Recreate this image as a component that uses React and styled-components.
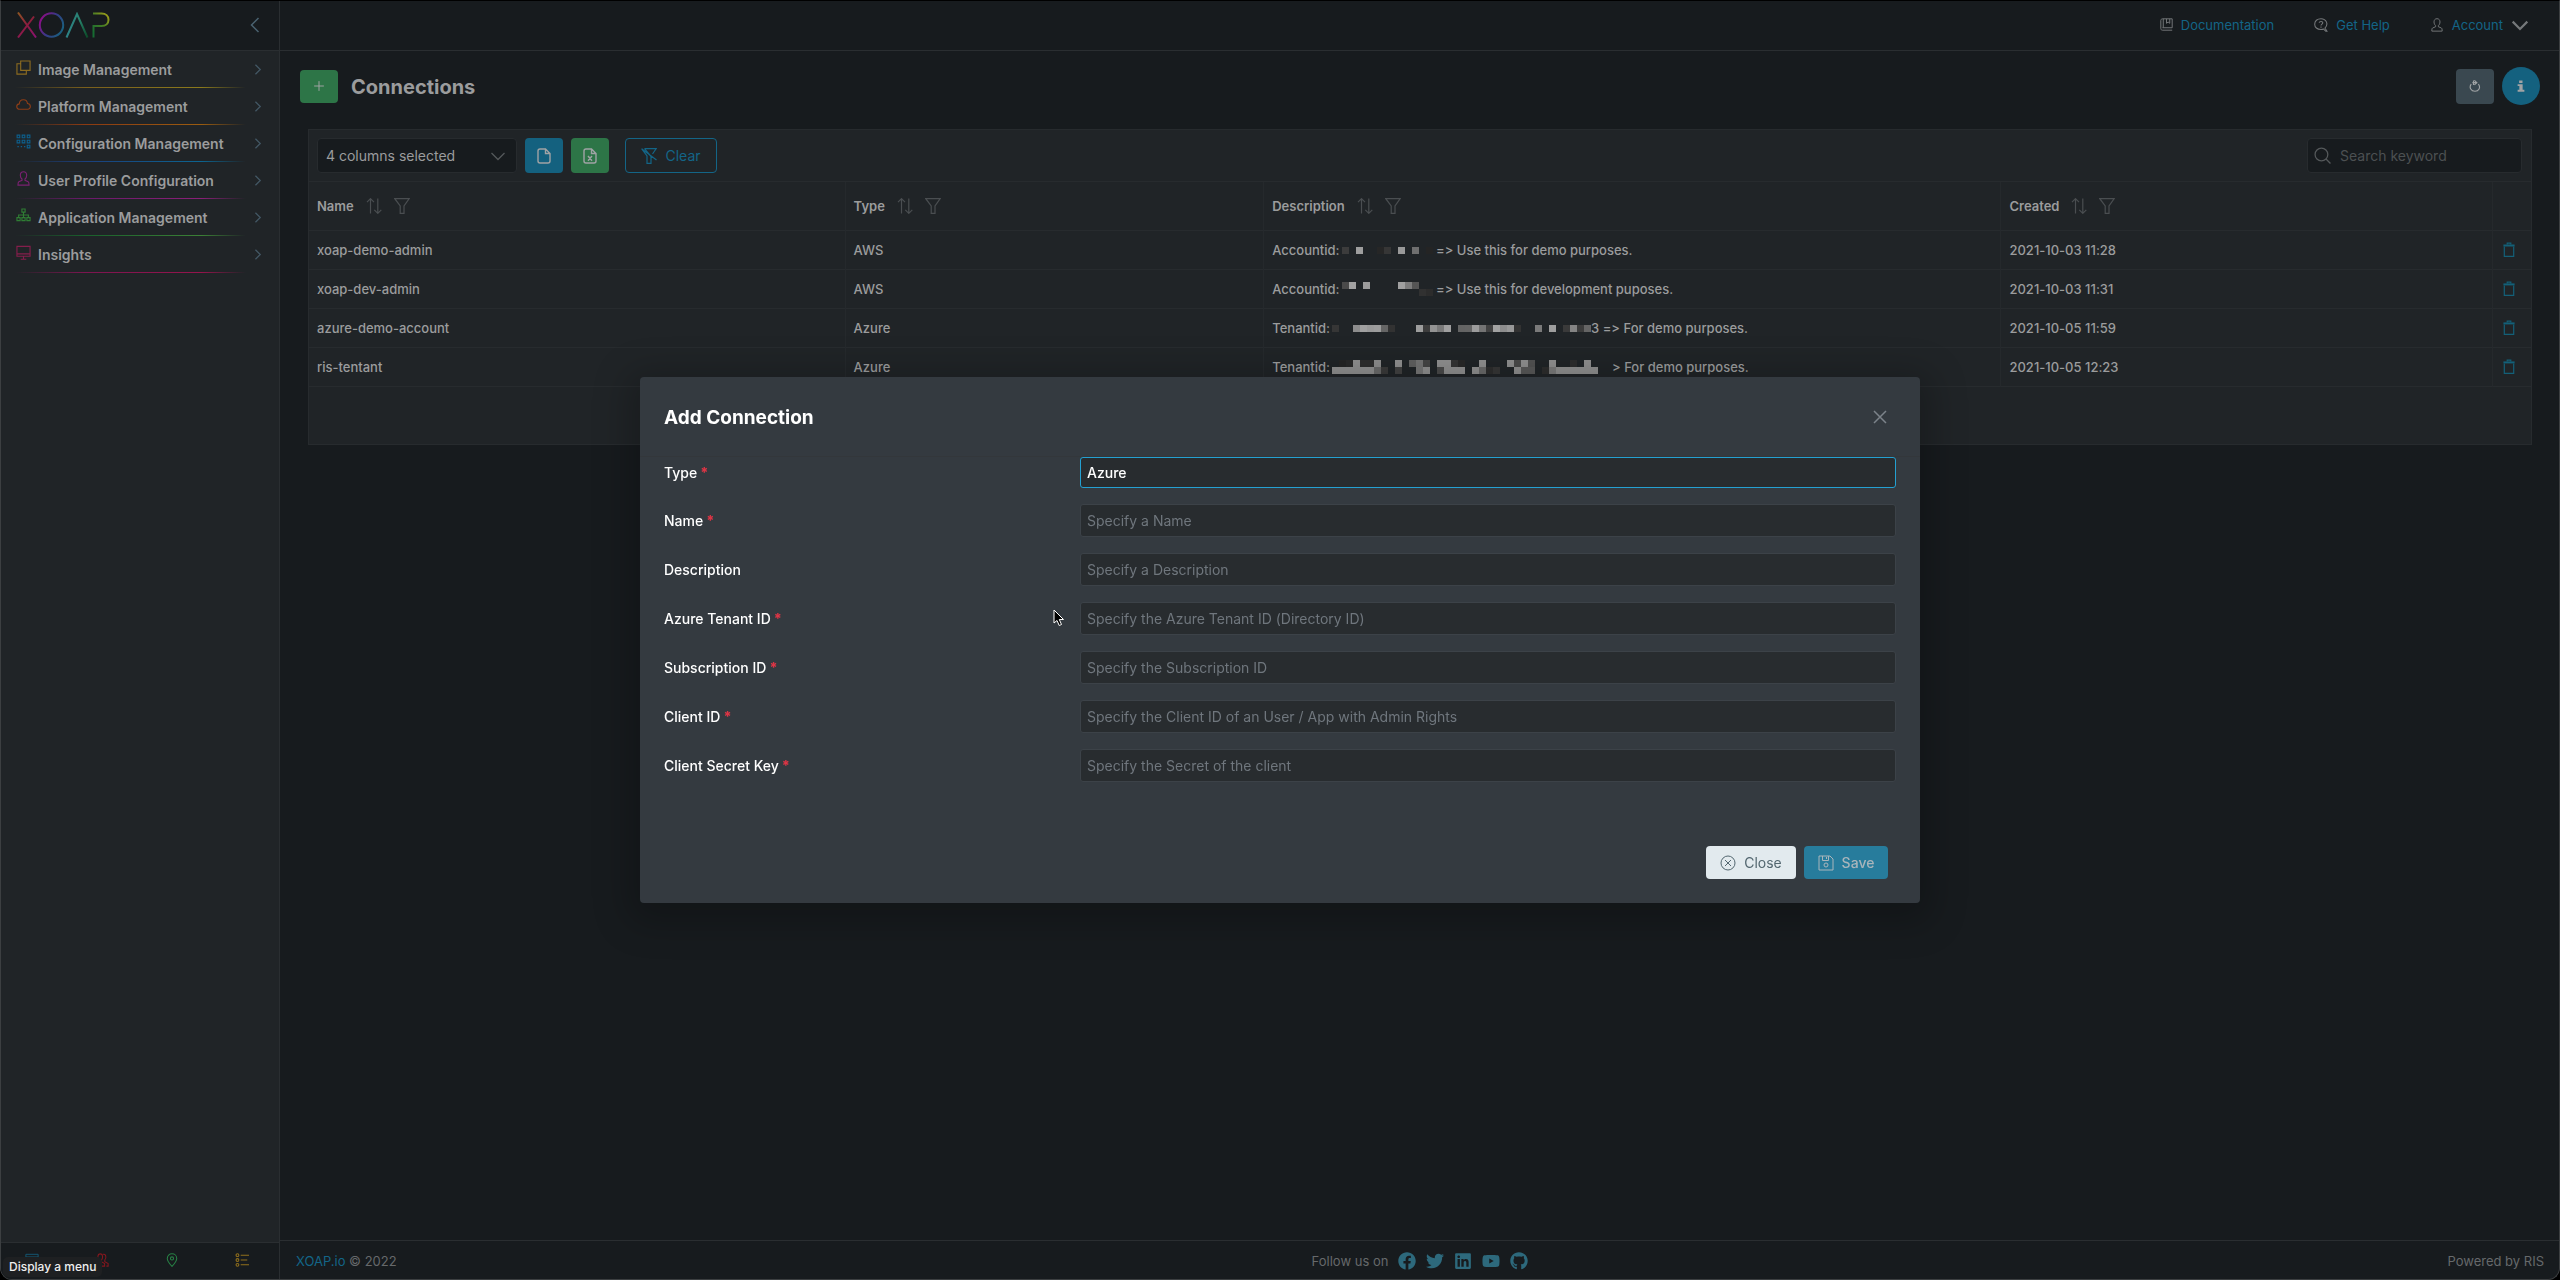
import React, { useState } from 'react';
import styled, { createGlobalStyle } from 'styled-components';
import { FaFacebook, FaTwitter, FaLinkedin, FaYoutube, FaGithub } from 'react-icons/fa';

const GlobalStyle = createGlobalStyle`
  * {
    box-sizing: border-box;
  }

  body {
    margin: 0;
    background-color: #000000;
    color: #9b9c9d;
    font-family: Inter, 'Liberation Sans', sans-serif;
    font-size: 14px;
    font-variant-ligatures: no-contextual;
    line-height: 20px;
  }

  button, input, select {
    font: inherit;
  }
`;

const Page = styled.div`
  display: grid;
  grid-template-columns: 279px 1fr;
  min-height: 100vh;
  background-color: #171b1e;
  border: 1px solid #3c3f41;
  border-top-color: #000000;
  border-radius: 0 0 12px 12px;
  overflow: hidden;
`;

const Sidebar = styled.aside`
  display: flex;
  flex-direction: column;
  background-color: #202427;
  border-right: 1px solid #2a2e31;
`;

const SidebarTop = styled.div`
  display: flex;
  justify-content: space-between;
  align-items: center;
  height: 50px;
  padding: 0 16px 2px 16px;
  background-color: #171b1e;
  border-bottom: 1px solid #2a2e31;
`;

const IconButton = styled.button`
  display: flex;
  padding: 0;
  border: none;
  background: none;
  color: ${props => props.$color || '#3f5360'};
  cursor: pointer;
`;

const Menu = styled.nav`
  display: flex;
  flex-direction: column;
  flex: 1;
`;

const MenuItem = styled.a`
  display: flex;
  align-items: center;
  height: 37px;
  padding: 0 16px 0 15px;
  color: #9b9c9d;
  font-weight: 600;
  text-decoration: none;
  background: linear-gradient(
    90deg,
    transparent 5%,
    ${props => props.$from} 30%,
    ${props => props.$to} 72%,
    transparent 88%
  ) bottom / 100% 1px no-repeat;

  span {
    flex: 1;
    margin-left: 7px;
  }
`;

const MenuIcon = styled.svg`
  flex: none;
  margin-bottom: 4px;
`;

const SidebarBottom = styled.div`
  display: flex;
  align-items: center;
  gap: 56px;
  height: 37px;
  padding: 0 24px 2px;
  background-color: #171b1e;
  border-top: 1px solid #2a2e31;
`;

const Content = styled.div`
  display: flex;
  flex-direction: column;
  min-width: 0;
`;

const TopBar = styled.header`
  display: flex;
  justify-content: flex-end;
  align-items: center;
  gap: 40px;
  height: 50px;
  padding: 0 30px 2px 0;
  border-bottom: 1px solid #2a2e31;
`;

const TopLink = styled.a`
  display: flex;
  align-items: center;
  gap: 8px;
  color: #136587;
  font-size: 13px;
  text-decoration: none;

  svg {
    color: #75787a;
  }
`;

const Main = styled.main`
  flex: 1;
  padding: 16px 19px 16px 20px;
`;

const TitleBar = styled.div`
  display: flex;
  align-items: center;
  height: 38px;
`;

const Title = styled.h1`
  flex: 1;
  margin: 0 0 0 13px;
  padding-top: 2px;
  font-size: 20px;
  font-weight: 700;
  line-height: 28px;
`;

const SolidButton = styled.button`
  display: flex;
  justify-content: center;
  align-items: center;
  width: 38px;
  height: ${props => props.$height || 35}px;
  padding: 0;
  border: none;
  border-radius: ${props => (props.$round ? '50%' : '4px')};
  background-color: ${props => props.$color};
  color: #a0a3a5;
  cursor: pointer;

  & + & {
    margin-left: 8px;
  }
`;

const Panel = styled.section`
  margin: 24px 8px 0 8px;
  padding-bottom: 57px;
  background-color: #202427;
  border: 1px solid #272b2e;
`;

const Toolbar = styled.div`
  display: flex;
  align-items: center;
  height: 52px;
  padding: 0 9px 0 8px;
  border-bottom: 1px solid #272b2e;
`;

const SelectBox = styled.div`
  display: grid;
  align-items: center;
  width: 200px;
  height: 35px;
  margin-right: 8px;

  select, svg {
    grid-area: 1 / 1;
  }

  select {
    appearance: none;
    width: 100%;
    height: 100%;
    padding: 0 8px;
    border: 1px solid #272b2e;
    border-radius: 4px;
    background-color: #171b1e;
    color: #9b9c9d;
  }

  svg {
    justify-self: end;
    margin-right: 11px;
    color: #54585a;
    pointer-events: none;
  }
`;

const ClearButton = styled.button`
  display: flex;
  justify-content: center;
  align-items: center;
  gap: 8px;
  width: 92px;
  height: 35px;
  margin: 0 auto 0 16px;
  padding: 0;
  border: 1px solid #136587;
  border-radius: 4px;
  background: none;
  color: #136587;
  cursor: pointer;
`;

const SearchBox = styled.label`
  display: flex;
  align-items: center;
  gap: 9px;
  width: 215px;
  height: 35px;
  padding: 0 6px;
  border: 1px solid #272b2e;
  border-radius: 4px;
  background-color: #171b1e;
  color: #54585a;

  svg {
    flex: none;
  }

  input {
    width: 100%;
    padding: 0;
    border: none;
    outline: none;
    background: none;
    color: #9b9c9d;
  }

  input::placeholder {
    color: #4c5052;
    opacity: 1;
  }
`;

const Table = styled.table`
  width: 100%;
  table-layout: fixed;
  border-collapse: separate;
  border-spacing: 0;
  font-size: 13px;
`;

const HeadCell = styled.th`
  width: ${props => props.$width};
  height: 49px;
  padding: 0 8px;
  border-right: 1px solid #25292c;
  border-bottom: 1px solid #272b2e;
  font-weight: 600;
  text-align: left;

  &:last-child {
    border-right: none;
  }
`;

const HeadContent = styled.div`
  display: flex;
  align-items: center;
  gap: 12px;
`;

const Cell = styled.td`
  height: 39px;
  padding: 0 8px;
  border-right: 1px solid #25292c;
  border-bottom: 1px solid #272b2e;
  white-space: nowrap;
  font-weight: 500;

  &:last-child {
    border-right: none;
  }
`;

const DescriptionLine = styled.div`
  display: flex;
  align-items: center;
  white-space: pre;
`;

const Mosaic = styled.svg`
  flex: none;
  margin-left: 2px;
`;

const Footer = styled.footer`
  display: grid;
  grid-template-columns: 1fr auto 1fr;
  align-items: center;
  height: 39px;
  padding: 2px 15px 0 16px;
  border-top: 1px solid #2a2e31;
  color: #66696b;
  font-size: 13px;

  a {
    color: #136587;
    text-decoration: none;
  }

  div:last-child {
    text-align: right;
  }
`;

const Social = styled.div`
  display: flex;
  align-items: center;
  gap: 10px;

  a {
    display: flex;
    color: #2d697c;
  }
`;

const Backdrop = styled.div`
  position: fixed;
  inset: 0;
  display: flex;
  justify-content: center;
  align-items: center;
`;

const Dialog = styled.form`
  width: 50%;
  background-color: #343a40;
  border-radius: 4px;
  box-shadow: 0 8px 36px 12px rgba(0, 0, 0, 0.22);
  color: #ffffff;
`;

const DialogHeader = styled.div`
  display: flex;
  justify-content: space-between;
  align-items: center;
  height: 80px;
  padding: 0 32px 0 24px;
  border-bottom: 1px solid #33373b;

  h2 {
    margin: 0;
    padding-top: 2px;
    font-size: 19px;
    font-weight: 700;
    line-height: 24px;
  }
`;

const Fields = styled.div`
  display: flex;
  flex-direction: column;
  gap: 16px;
  padding: 0 24px;
`;

const Field = styled.div`
  display: grid;
  grid-template-columns: 1fr 2fr;
  align-items: center;
  gap: 8px;

  label {
    font-weight: 500;
  }

  em {
    color: #dc3545;
    font-style: normal;
    font-weight: 800;
  }

  input {
    width: 100%;
    height: ${props => (props.$active ? 31 : 33)}px;
    padding: 0 6px;
    border: 1px solid ${props => (props.$active ? '#24a0d1' : '#3c4248')};
    border-radius: 3px;
    outline: none;
    background-color: #282c2f;
    color: #ffffff;
    font-weight: ${props => (props.$active ? 500 : 400)};
  }

  input::placeholder {
    color: #6f767d;
    opacity: 1;
  }
`;

const DialogFooter = styled.div`
  display: flex;
  justify-content: flex-end;
  gap: 8px;
  padding: 64px 32px 24px;
`;

const DialogButton = styled.button`
  display: flex;
  justify-content: center;
  align-items: center;
  gap: 8px;
  width: ${props => (props.$primary ? 84 : 90)}px;
  height: 33px;
  padding: 0;
  border: none;
  border-radius: 4px;
  background-color: ${props => (props.$primary ? '#277c9c' : '#e2eaee')};
  color: ${props => (props.$primary ? '#a9b5bb' : '#536770')};
  font-weight: ${props => (props.$primary ? 500 : 400)};
`;

const Tooltip = styled.div`
  position: fixed;
  left: 3px;
  bottom: 3px;
  padding: 0 6px;
  border-radius: 5px;
  background-color: #1e2022;
  color: #eeeeee;
  font-size: 12px;
  font-weight: 500;
`;

const Cursor = styled.svg`
  position: fixed;
  left: 1053px;
  top: 609px;
`;

const Icon = ({ size = 16, width = 1, children, ...rest }) => (
  <svg width={size} height={size} viewBox="0 0 16 16" fill="none" stroke="currentColor" strokeWidth={width} {...rest}>
    {children}
  </svg>
);

const Chevron = ({ size, width }) => (
  <Icon size={size} width={width}><path d="M1.5 5L8 11.5L14.5 5" /></Icon>
);

const SortIcon = () => (
  <Icon width={1.2}><path d="M4.5 15.5V.8M1 4.2L4.5.7L8 4.2M11.8.5V15.2M8.3 11.8L11.8 15.3L15.3 11.8" /></Icon>
);

const FilterIcon = () => (
  <Icon width={1.2}><path d="M.8.7H15.2L10 8V15.4H6.2V8Z" /></Icon>
);

const TrashIcon = () => (
  <Icon width={1.2}>
    <path d="M3.3 4.4V14.4H12.7V4.4" />
    <path d="M2.4 3.4H13.6" strokeWidth="2" />
    <path d="M6.2 2.5V1.2H9.8V2.5" />
  </Icon>
);

const UserIcon = ({ size = 14 }) => (
  <Icon size={size} width={1.1}>
    <path d="M8 .8C5.7.8 4.6 2.4 4.6 4.5C4.6 6.5 5.4 7.8 6.4 8.6V10L3 11.4C2.3 11.8 2.1 13 2.1 15H13.9C13.9 13 13.7 11.8 13 11.4L9.6 10V8.6C10.6 7.8 11.4 6.5 11.4 4.5C11.4 2.4 10.3.8 8 .8Z" />
  </Icon>
);

const Logo = () => (
  <svg width="94" height="26" viewBox="0 0 94 26" fill="none" strokeWidth="2">
    <defs>
      <linearGradient id="x" x1="0" y1="0" x2="20" y2="25" gradientUnits="userSpaceOnUse">
        <stop stopColor="#8e5a20" /><stop offset=".5" stopColor="#8c1c3e" /><stop offset="1" stopColor="#8a1274" />
      </linearGradient>
      <linearGradient id="o" x1="22" y1="8" x2="46" y2="20" gradientUnits="userSpaceOnUse">
        <stop stopColor="#920a86" /><stop offset=".5" stopColor="#353b86" /><stop offset="1" stopColor="#17637e" />
      </linearGradient>
      <linearGradient id="a" x1="50" y1="20" x2="70" y2="24" gradientUnits="userSpaceOnUse">
        <stop stopColor="#2d8288" /><stop offset=".5" stopColor="#28816b" /><stop offset="1" stopColor="#0c4d2a" />
      </linearGradient>
      <linearGradient id="p" x1="76" y1="20" x2="92" y2="6" gradientUnits="userSpaceOnUse">
        <stop stopColor="#166c32" /><stop offset=".5" stopColor="#3f7a25" /><stop offset="1" stopColor="#93991b" />
      </linearGradient>
    </defs>
    <path d="M1 .5L19 25.5M17 4.5L1 25.5" stroke="url(#x)" />
    <circle cx="34.5" cy="13" r="11.7" stroke="url(#o)" />
    <path d="M49.5 25.5L60 2L70.5 25.5" stroke="url(#a)" />
    <path d="M76.5 25.5V14H84.5C88.8 14 91.5 11.5 91.5 7.8C91.5 4 88.8 1.5 84.5 1.5H76" stroke="url(#p)" />
  </svg>
);

const menu = [
  {
    label: 'Image Management', color: '#8b6b20', from: '#7a5f1c', to: '#8b7a1c',
    icon: <path d="M5 1H15V11H5ZM5 4H1V15H11V11" />,
  },
  {
    label: 'Platform Management', color: '#8c3d17', from: '#8b3a12', to: '#9a5c10',
    icon: <path d="M4 13C-.2 13 -.2 7.7 3.6 7.3C3.6 1.6 11.6 1.3 12.3 7C16.3 7.3 16.2 13 12.5 13Z" />,
  },
  {
    label: 'Configuration Management', color: '#0d5f8c', from: '#1b3f7c', to: '#0c6490',
    icon: <path d="M1.2 1.2H4V4H1.2ZM6.6 1.2H9.4V4H6.6ZM12 1.2H14.8V4H12ZM1.2 6.6H4V9.4H1.2ZM6.6 6.6H9.4V9.4H6.6ZM12 6.6H14.8V9.4H12ZM12 12H14.8V14.8H12ZM1.5 13.5H3M5 13.5H6.5M8.5 13.5H10" />,
  },
  {
    label: 'User Profile Configuration', color: '#7a2171', from: '#6a1a6a', to: '#8a2078',
    icon: <path d="M8 .8C5.7.8 4.6 2.4 4.6 4.5C4.6 6.5 5.4 7.8 6.4 8.6V10L3 11.4C2.3 11.8 2.1 13 2.1 15H13.9C13.9 13 13.7 11.8 13 11.4L9.6 10V8.6C10.6 7.8 11.4 6.5 11.4 4.5C11.4 2.4 10.3.8 8 .8Z" />,
  },
  {
    label: 'Application Management', color: '#2f7d34', from: '#19602c', to: '#3c8036',
    icon: <path d="M6.3 1H9.7V4.4H6.3ZM8 4.4V10M2.8 10V7.4H13.2V10M1 10.2H4.4V13.4H1ZM6.3 10.2H9.7V13.4H6.3ZM11.6 10.2H15V13.4H11.6Z" />,
  },
  {
    label: 'Insights', color: '#851e4c', from: '#7c1550', to: '#95144c',
    icon: <path d="M1 1.5H15V12H1ZM1 9.5H15M8 12V15M5 15.2H11" />,
  },
];

// [column, row, shade] of every 7px block that hides an account id
const mosaics = {
  demo: [[0, 0, 60], [2, 0, 158], [5, 0, 38], [6, 0, 54], [8, 0, 153], [10, 0, 111], [12, 0, 36]],
  dev: [[0, 0, 74], [1, 0, 162], [3, 0, 156], [8, 0, 160], [9, 0, 125], [10, 0, 85], [11, 1, 49], [12, 1, 44]],
  azure: [
    [0, 0, 54], [3, 0, 141], [4, 0, 160], [5, 0, 153], [6, 0, 156], [7, 0, 101], [8, 0, 50],
    [12, 0, 157], [13, 0, 61], [14, 0, 147], [15, 0, 122], [16, 0, 160],
    [18, 0, 100], [19, 0, 101], [20, 0, 156], [21, 0, 116], [22, 0, 65], [23, 0, 162], [24, 0, 141], [25, 0, 152], [26, 0, 50],
    [29, 0, 122], [31, 0, 158], [33, 0, 58], [34, 0, 132], [35, 0, 60], [36, 0, 101],
  ],
  ris: [
    [1, 0, 37], [2, 0, 41], [3, 0, 143], [4, 0, 45], [5, 0, 45], [6, 0, 140], [9, 0, 143], [11, 0, 96], [12, 0, 116], [13, 0, 69],
    [15, 0, 143], [16, 0, 143], [17, 0, 52], [18, 0, 40], [21, 0, 143], [25, 0, 143], [26, 0, 74], [27, 0, 143], [28, 0, 82],
    [31, 0, 143], [34, 0, 45], [36, 0, 143],
    [0, 1, 143], [1, 1, 143], [2, 1, 143], [3, 1, 143], [4, 1, 143], [5, 1, 143], [6, 1, 106], [7, 1, 58], [9, 1, 66],
    [12, 1, 118], [13, 1, 143], [15, 1, 74], [16, 1, 143], [17, 1, 143], [18, 1, 143], [20, 1, 143], [21, 1, 106], [22, 1, 45], [23, 1, 54],
    [26, 1, 143], [27, 1, 88], [28, 1, 88], [30, 1, 45], [31, 1, 122], [32, 1, 143], [33, 1, 143], [34, 1, 143], [35, 1, 143], [36, 1, 143], [37, 1, 143],
  ],
};

const connections = [
  { name: 'xoap-demo-admin', type: 'AWS', id: 'Accountid:', mosaic: 'demo', blocks: 13, text: ' => Use this for demo purposes.', created: '2021-10-03 11:28' },
  { name: 'xoap-dev-admin', type: 'AWS', id: 'Accountid:', mosaic: 'dev', blocks: 13, text: ' => Use this for development puposes.', created: '2021-10-03 11:31' },
  { name: 'azure-demo-account', type: 'Azure', id: 'Tenantid:', mosaic: 'azure', blocks: 37, text: '3 => For demo purposes.', created: '2021-10-05 11:59' },
  { name: 'ris-tentant', type: 'Azure', id: 'Tenantid:', mosaic: 'ris', blocks: 40, text: '> For demo purposes.', created: '2021-10-05 12:23' },
];

const columns = [
  { label: 'Name', width: '24.15%' },
  { label: 'Type', width: '18.84%' },
  { label: 'Description', width: '33.18%' },
  { label: 'Created', width: 'auto' },
];

const fields = [
  { id: 'type', label: 'Type', required: true, value: 'Azure' },
  { id: 'name', label: 'Name', required: true, placeholder: 'Specify a Name' },
  { id: 'description', label: 'Description', placeholder: 'Specify a Description' },
  { id: 'tenant', label: 'Azure Tenant ID', required: true, placeholder: 'Specify the Azure Tenant ID (Directory ID)' },
  { id: 'subscription', label: 'Subscription ID', required: true, placeholder: 'Specify the Subscription ID' },
  { id: 'client', label: 'Client ID', required: true, placeholder: 'Specify the Client ID of an User / App with Admin Rights' },
  { id: 'secret', label: 'Client Secret Key', required: true, placeholder: 'Specify the Secret of the client' },
];

const Blocks = ({ name, count }) => {
  const cells = mosaics[name];
  const rows = Math.max(...cells.map(cell => cell[1])) + 1;
  return (
    <Mosaic width={count * 7} height={rows * 7} shapeRendering="crispEdges" aria-hidden="true">
      {cells.map(([x, y, shade]) => (
        <rect key={`${x}-${y}`} x={x * 7} y={y * 7} width="7" height="7" fill={`rgb(${shade}, ${shade}, ${shade})`} />
      ))}
    </Mosaic>
  );
};

const AddConnection = () => {
  const [values, setValues] = useState({ type: 'Azure' });

  const handleChange = (e) => {
    setValues({ ...values, [e.target.id]: e.target.value });
  };

  return (
    <Backdrop>
      <Dialog role="dialog" aria-labelledby="dialog-title" onSubmit={e => e.preventDefault()}>
        <DialogHeader>
          <h2 id="dialog-title">Add Connection</h2>
          <IconButton type="button" aria-label="Close dialog" $color="#7c838a">
            <Icon width={1.5}><path d="M2 2L14 14M14 2L2 14" /></Icon>
          </IconButton>
        </DialogHeader>
        <Fields>
          {fields.map(field => (
            <Field key={field.id} $active={field.id === 'type'}>
              <label htmlFor={field.id}>{field.label}{field.required && <em> *</em>}</label>
              <input id={field.id} value={values[field.id] || ''} placeholder={field.placeholder} onChange={handleChange} />
            </Field>
          ))}
        </Fields>
        <DialogFooter>
          <DialogButton type="button">
            <Icon><circle cx="8" cy="8" r="7" /><path d="M5 5L11 11M11 5L5 11" /></Icon>
            Close
          </DialogButton>
          <DialogButton type="submit" $primary disabled>
            <Icon><path d="M1 1H12L15 4V15H1ZM4.5 1V5.5H10.5V1M8.5 2V4" /><circle cx="8" cy="10" r="2" /></Icon>
            Save
          </DialogButton>
        </DialogFooter>
      </Dialog>
    </Backdrop>
  );
};

export default function App() {
  const [keyword, setKeyword] = useState('');

  return (
    <>
      <GlobalStyle />
      <Page>
        <Sidebar>
          <SidebarTop>
            <Logo />
            <IconButton aria-label="Collapse menu" $color="#4a6270">
              <Icon width={1.5}><path d="M11.5 1L4.5 8L11.5 15" /></Icon>
            </IconButton>
          </SidebarTop>
          <Menu>
            {menu.map(item => (
              <MenuItem key={item.label} href="#" $from={item.from} $to={item.to}>
                <MenuIcon width="15" height="15" viewBox="0 0 16 16" fill="none" stroke={item.color} strokeWidth="1.2">
                  {item.icon}
                </MenuIcon>
                <span>{item.label}</span>
                <Icon size={11} width={1.8} color="#435865"><path d="M5 1L12 8L5 15" /></Icon>
              </MenuItem>
            ))}
          </Menu>
          <SidebarBottom>
            <IconButton aria-label="Dashboard" $color="#155e7c">
              <Icon size={14}><path d="M1 1.5H15V15H1ZM1 4.5H15M5 4.5V15" /></Icon>
            </IconButton>
            <IconButton aria-label="Users" $color="#84171e">
              <Icon size={14} width={1.2}>
                <path d="M6 1C2.5 1 2.8 6.5 4.8 8V10L1 12V15H11V12L7.2 10V8C9.2 6.5 9.5 1 6 1ZM9 1.5C12.5.5 13.5 5.5 11.2 8V10L15 12V15H13" />
              </Icon>
            </IconButton>
            <IconButton aria-label="Location" $color="#278045">
              <Icon size={14} width={1.2}><path d="M8 15.3C4.5 11.5 2.6 8.8 2.6 6.2C2.6 3 5 .8 8 .8C11 .8 13.4 3 13.4 6.2C13.4 8.8 11.5 11.5 8 15.3Z" /><circle cx="8" cy="6.2" r="1.8" /></Icon>
            </IconButton>
            <IconButton aria-label="List" $color="#91701c">
              <Icon size={14} width={1.2}><circle cx="2.8" cy="2.5" r="1.6" /><circle cx="2.8" cy="8" r="1.6" /><circle cx="2.8" cy="13.5" r="1.6" /><path d="M6.5 2.5H16M6.5 8H14M6.5 13.5H16" /></Icon>
            </IconButton>
          </SidebarBottom>
        </Sidebar>

        <Content>
          <TopBar>
            <TopLink href="#">
              <Icon size={13} width={1.2}><path d="M15 12V1H3C1.8 1 1 2 1 3V13C1 14.2 1.8 15 3 15H15M3 12H15M4 1V12M8 1V6.5L10 5L12 6.5V1" /></Icon>
              Documentation
            </TopLink>
            <TopLink href="#">
              <Icon size={14} width={1.2}><path d="M12.5 11.5C17 7 14 .8 8 .8C3.5.8.8 3.5.8 7C.8 10.5 3.5 13.2 8 13.2C9.5 13.2 10.2 13 11 12.6L13.5 15.2H14.8ZM6 5.5C6 3.5 10.2 3.5 10 5.7C9.9 7 8 7 8 8.7M8 9.8V11" /></Icon>
              Get Help
            </TopLink>
            <TopLink href="#">
              <UserIcon />
              Account
              <Chevron size={18} width={1.9} />
            </TopLink>
          </TopBar>

          <Main>
            <TitleBar>
              <SolidButton aria-label="Add connection" $color="#2d7547" $height={33}>
                <Icon size={12} width={1.3}><path d="M8 1.5V14.5M1.5 8H14.5" /></Icon>
              </SolidButton>
              <Title>Connections</Title>
              <SolidButton aria-label="Reload" $color="#3a4850">
                <Icon size={12} width={1.5}><path d="M3 5.5C-.5 10 3 15 8 15C13 15 16 10 12.5 5.5M4.5 3.5H10M7.2 .5L10.5 3.5L7.2 6.5M6 .8V6.5" /></Icon>
              </SolidButton>
              <SolidButton aria-label="Information" $color="#14617f" $height={38} $round>
                <Icon size={12} stroke="none"><path fill="currentColor" d="M5.5.5H10V4H5.5ZM3.5 5.5H10.2V13H12.5V15.5H3.5V13H5.8V8H3.5Z" /></Icon>
              </SolidButton>
            </TitleBar>

            <Panel>
              <Toolbar>
                <SelectBox>
                  <select aria-label="Columns"><option>4 columns selected</option></select>
                  <Chevron size={16} width={1.3} />
                </SelectBox>
                <SolidButton aria-label="Export CSV" $color="#14617f">
                  <Icon width={1.4}><path d="M9.5 1H4C2.8 1 2 1.8 2 3V13C2 14.2 2.8 15 4 15H12C13.2 15 14 14.2 14 13V5.5ZM9.5 1V5.5H14" /></Icon>
                </SolidButton>
                <SolidButton aria-label="Export Excel" $color="#2d7547">
                  <Icon width={1.4}><path d="M9.5 1H4C2.8 1 2 1.8 2 3V13C2 14.2 2.8 15 4 15H12C13.2 15 14 14.2 14 13V5.5ZM9.5 1V5.5H14M6 8L10 12.8M10 8L6 12.8" /></Icon>
                </SolidButton>
                <ClearButton>
                  <Icon width={1.2}><path d="M3.5.7H15.2L11.5 6M.6.7L15.500 12M.6.7L6 8V15.4H10V8.5M3.5.7L10 8.5" /></Icon>
                  Clear
                </ClearButton>
                <SearchBox>
                  <Icon size={17} width={1.2}><circle cx="7" cy="7" r="6" /><path d="M11.3 11.3L15.5 15.5" /></Icon>
                  <input aria-label="Search keyword" placeholder="Search keyword" value={keyword} onChange={e => setKeyword(e.target.value)} />
                </SearchBox>
              </Toolbar>
              <Table>
                <thead>
                  <tr>
                    {columns.map(column => (
                      <HeadCell key={column.label} $width={column.width}>
                        <HeadContent>
                          {column.label}
                          <IconButton aria-label={`Sort by ${column.label}`} $color="#4a4e51"><SortIcon /></IconButton>
                          <IconButton aria-label={`Filter by ${column.label}`} $color="#4a4e51"><FilterIcon /></IconButton>
                        </HeadContent>
                      </HeadCell>
                    ))}
                    <HeadCell $width="38px" />
                  </tr>
                </thead>
                <tbody>
                  {connections.map(row => (
                    <tr key={row.name}>
                      <Cell>{row.name}</Cell>
                      <Cell>{row.type}</Cell>
                      <Cell>
                        <DescriptionLine>
                          {row.id}
                          <Blocks name={row.mosaic} count={row.blocks} />
                          {row.text}
                        </DescriptionLine>
                      </Cell>
                      <Cell>{row.created}</Cell>
                      <Cell>
                        <IconButton aria-label={`Delete ${row.name}`} $color="#136078"><TrashIcon /></IconButton>
                      </Cell>
                    </tr>
                  ))}
                </tbody>
              </Table>
            </Panel>
          </Main>

          <Footer>
            <div><a href="#">XOAP.io</a> © 2022</div>
            <Social>
              Follow us on
              <a href="#" aria-label="Facebook"><FaFacebook size={18} /></a>
              <a href="#" aria-label="Twitter"><FaTwitter size={18} /></a>
              <a href="#" aria-label="LinkedIn"><FaLinkedin size={18} /></a>
              <a href="#" aria-label="YouTube"><FaYoutube size={18} /></a>
              <a href="#" aria-label="GitHub"><FaGithub size={18} /></a>
            </Social>
            <div>Powered by RIS</div>
          </Footer>
        </Content>
      </Page>
      <AddConnection />
      <Tooltip role="tooltip">Display a menu</Tooltip>
      <Cursor width="12" height="18" viewBox="0 0 12 18" aria-hidden="true">
        <path d="M1 1V14L4 11.5L6.2 16.5L8.5 15.5L6.3 10.5H10.5Z" fill="#000000" stroke="#ffffff" strokeWidth="1" />
      </Cursor>
    </>
  );
}
